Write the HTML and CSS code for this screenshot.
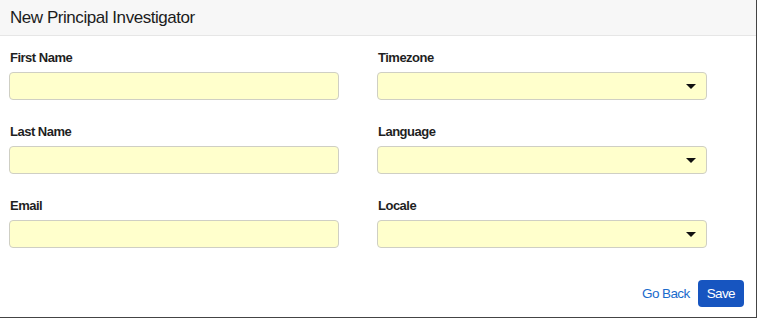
FILE: index.html
```html
<!DOCTYPE html>
<html>
<head>
<meta charset="utf-8">
<link rel="stylesheet" href="styles.css">
</head>
<body>
<div class="modal">
  <div class="modal-header">
    <h1 class="title">New Principal Investigator</h1>
  </div>
  <div class="modal-body">
    <div class="form-grid">
      <div class="field">
        <label class="label">First Name</label>
        <input class="input" type="text">
      </div>
      <div class="field">
        <label class="label">Timezone</label>
        <div class="select"><span class="caret"></span></div>
      </div>
      <div class="field">
        <label class="label">Last Name</label>
        <input class="input" type="text">
      </div>
      <div class="field">
        <label class="label">Language</label>
        <div class="select"><span class="caret"></span></div>
      </div>
      <div class="field">
        <label class="label">Email</label>
        <input class="input" type="text">
      </div>
      <div class="field">
        <label class="label">Locale</label>
        <div class="select"><span class="caret"></span></div>
      </div>
    </div>
  </div>
  <div class="modal-footer">
    <a class="link" href="#">Go Back</a>
    <button class="btn-save" type="button">Save</button>
  </div>
</div>
</body>
</html>
```
FILE: styles.css
```css
* { box-sizing: border-box; }
html, body { margin: 0; padding: 0; background: #fff; }
body {
  font-family: "Liberation Sans", Arial, sans-serif;
  color: #222;
  width: 757px;
  height: 318px;
  overflow: hidden;
}
.modal {
  width: 757px;
  height: 318px;
  border-right: 1px solid #444;
  border-bottom: 1px solid #444;
  display: flex;
  flex-direction: column;
}
.modal-header {
  height: 36px;
  background: #f7f7f7;
  border-bottom: 1px solid #e6e6e6;
  padding: 0 10px;
  display: flex;
  align-items: center;
}
.title {
  margin: 0;
  font-size: 17px;
  letter-spacing: -0.45px;
  font-weight: normal;
  color: #1c1c1c;
}
.modal-body {
  padding: 14px 9px 0;
}
.form-grid {
  display: grid;
  grid-template-columns: 330px 330px;
  column-gap: 38px;
  row-gap: 24px;
}
.field {
  display: flex;
  flex-direction: column;
}
.label {
  font-size: 13px;
  letter-spacing: -0.5px;
  font-weight: bold;
  line-height: 16px;
  color: #1f1f1f;
  margin-bottom: 6px;
  padding-left: 1px;
}
.input, .select {
  height: 28px;
  width: 330px;
  background: #ffffcc;
  border: 1px solid #cfcfc4;
  border-radius: 4px;
  margin: 0;
  padding: 0 8px;
  font: inherit;
}
.select {
  display: flex;
  align-items: center;
  justify-content: flex-end;
  padding-right: 10px;
}
.caret {
  width: 0;
  height: 0;
  border-left: 5px solid transparent;
  border-right: 5px solid transparent;
  border-top: 5px solid #111;
}
.modal-footer {
  margin-top: auto;
  display: flex;
  justify-content: flex-end;
  align-items: center;
  gap: 8px;
  padding: 0 12px 10px 0;
}
.link {
  color: #1a6bcc;
  text-decoration: none;
  font-size: 13.5px;
  letter-spacing: -0.6px;
}
.btn-save {
  height: 27px;
  padding: 0 9px;
  background: #1755c0;
  color: #fff;
  border: none;
  border-radius: 4px;
  font: inherit;
  font-size: 13.5px;
  letter-spacing: -0.6px;
}
```
